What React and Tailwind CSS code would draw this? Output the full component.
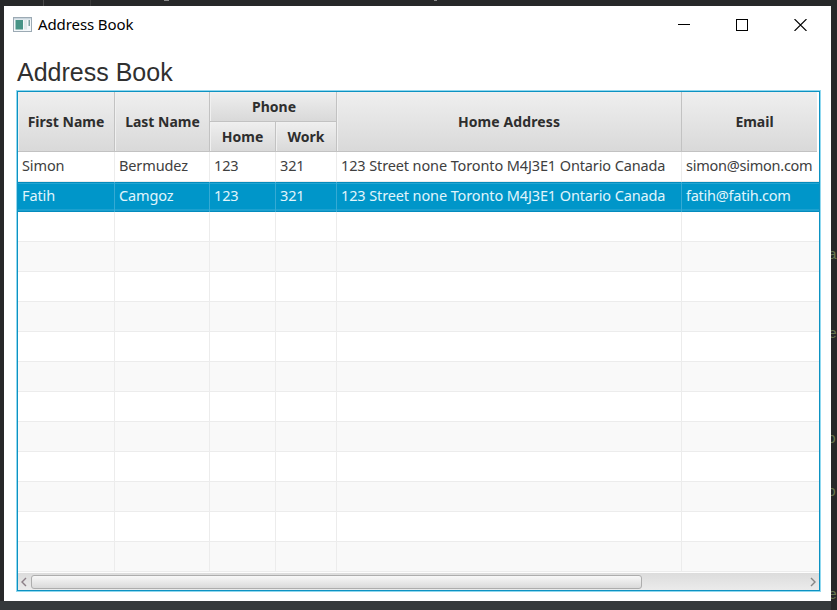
const DATA = [
  ["Simon", "Bermudez", "123", "321", "123 Street none Toronto M4J3E1 Ontario Canada", "simon@simon.com"],
  ["Fatih", "Camgoz", "123", "321", "123 Street none Toronto M4J3E1 Ontario Canada", "fatih@fatih.com"],
];

const ROWS = Array.from({ length: 14 }, (_, i) => DATA[i] || ["", "", "", "", "", ""]);
const COLS = "grid grid-cols-[97px_95px_66px_61px_345px_137px]";
const HEAD =
  "flex items-center justify-center border-r border-b border-[#c2c2c2] bg-linear-to-b from-[#efefef] to-[#d9d9d9] shadow-[inset_1px_1px_0_#f0f0f0]";

function rowClass(i) {
  if (i === 1) return "bg-[#0096c9] text-[#e0f5fc] shadow-[inset_0_1px_0_#038bbd,inset_0_-1px_0_#038bbd,inset_0_2px_0_#22a5d2,inset_0_-3px_0_#1ca0cf]";
  return i % 2 ? "bg-[#f9f9f9] border-b border-[#ececec]" : "bg-white border-b border-[#ececec]";
}

function TitleBar() {
  return (
    <div className="flex h-[37px] items-center pl-[9px] text-black">
      <svg width="19" height="15" viewBox="0 0 19 15" className="shrink-0">
        <rect x="0.5" y="0.5" width="18" height="14" fill="#f4f8fa" stroke="#9caab4" />
        <rect x="1" y="1" width="17" height="1.5" fill="#c9d5dd" />
        <rect x="2.5" y="3" width="7.5" height="9.5" fill="#479486" />
        <rect x="11" y="3" width="3" height="9.5" fill="#dfe9e9" />
        <rect x="15.5" y="3" width="1.5" height="6" fill="#7fa4a4" />
      </svg>
      <span className="ml-[6px] text-[15px] tracking-[-0.1px]">Address Book</span>
      <div className="mr-[24px] ml-auto flex gap-[46px]">
        <svg width="12" height="12" viewBox="0 0 12 12" shapeRendering="crispEdges">
          <path d="M0 5.5H12" stroke="#000" />
        </svg>
        <svg width="12" height="12" viewBox="0 0 12 12" shapeRendering="crispEdges">
          <rect x="0.5" y="0.5" width="11" height="11" fill="none" stroke="#000" />
        </svg>
        <svg width="13" height="12" viewBox="0 0 13 12">
          <path d="M0.5 0L12.5 12M12.5 0L0.5 12" stroke="#000" strokeWidth="1.1" />
        </svg>
      </div>
    </div>
  );
}

function Header() {
  return (
    <div className={`${COLS} h-[60px] text-[14px] font-bold text-[#2e2e2e]`}>
      <div className={HEAD}>First Name</div>
      <div className={`${HEAD} pl-px`}>Last Name</div>
      <div className="col-span-2 grid grid-cols-[66px_61px] grid-rows-2">
        <div className={`${HEAD} col-span-2 pl-[2px]`}>Phone</div>
        <div className={HEAD}>Home</div>
        <div className={HEAD}>Work</div>
      </div>
      <div className={`${HEAD} tracking-[0.1px]`}>Home Address</div>
      <div className="mr-[2px] flex items-center justify-center border-b border-[#c2c2c2] bg-linear-to-b from-[#efefef] to-[#d9d9d9] pl-[10px]">
        Email
      </div>
    </div>
  );
}

function ScrollBar() {
  return (
    <div className="flex h-[17px] items-center bg-linear-to-b from-[#dcdcdc] to-[#ebebeb] px-[3px]">
      <svg width="6" height="10" viewBox="0 0 6 10" fill="none" stroke="#8b7e86" strokeWidth="1.4">
        <path d="M5 1L1 5L5 9" />
      </svg>
      <div className="ml-[4px] h-[14px] w-[611px] rounded-[3px] border border-[#adadad] bg-linear-to-b from-[#f8f8f8] to-[#dadada]" />
      <svg className="ml-auto" width="6" height="10" viewBox="0 0 6 10" fill="none" stroke="#858585" strokeWidth="1.4">
        <path d="M1 1L5 5L1 9" />
      </svg>
    </div>
  );
}

function Table() {
  return (
    <div className="ml-[13px] h-[500px] w-[803px] border border-[#0d92c2] shadow-[0_0_0_1px_#90d8ef]">
      <Header />
      {ROWS.map((row, i) => (
        <div key={i} className={`${COLS} h-[30px] text-[14.5px] tracking-[-0.12px] text-[#404040] ${rowClass(i)}`}>
          {row.map((cell, j) => (
            <div
              key={j}
              className={`flex items-center whitespace-nowrap pl-[4px] ${j < 5 ? "border-r" : "tracking-[-0.25px]"} ${i === 1 ? "border-[#35aad4]" : "border-[#ececec]"}`}
            >
              <span className="-mt-[2px]">{cell}</span>
            </div>
          ))}
        </div>
      ))}
      <div className="h-px bg-[#fdfdfd]" />
      <ScrollBar />
    </div>
  );
}

export default function App() {
  return (
    <div className="relative h-[610px] w-[837px] overflow-hidden bg-[#272829] font-['Noto_Sans','Open_Sans',sans-serif]">
      <div className="h-[601px] pt-[6px] pl-[4px]">
        <div className="h-[595px] w-[827px] bg-white">
          <TitleBar />
          <h1 className="ml-[13px] h-[48px] pt-[11px] font-['Liberation_Sans',Arial,sans-serif] text-[25px] leading-[36px] text-[#303030]">
            Address Book
          </h1>
          <Table />
        </div>
      </div>
      <div className="h-[9px] w-[831px] bg-[#35393b]" />
      <div className="absolute top-0 left-[43px] h-[6px] w-px bg-[#4a4a4a]" />
      <div className="absolute top-0 left-[90px] h-[6px] w-px bg-[#3a3a3a]" />
      <div className="absolute top-0 left-[164px] h-px w-[5px] bg-[#8a8a8a]" />
      <div className="absolute top-0 left-[434px] h-px w-[3px] bg-[#8a8a8a]" />
      <div className="absolute top-0 left-[831px] h-[601px] w-[6px] overflow-hidden font-['Liberation_Mono',monospace] text-[15px] leading-[16px] text-[#66754f]">
        <span className="absolute top-[248px] left-[-3px]">a</span>
        <span className="absolute top-[327px] left-[-3px]">e</span>
        <span className="absolute top-[432px] left-[-4px]">o</span>
        <span className="absolute top-[485px] left-[-4px]">o</span>
        <span className="absolute top-[588px] left-[-3px]">e</span>
      </div>
    </div>
  );
}
